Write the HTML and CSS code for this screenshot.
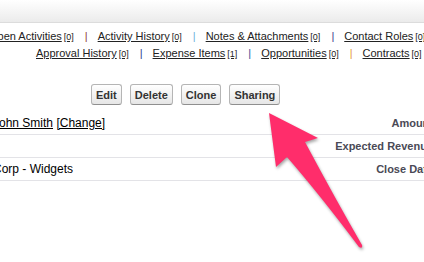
FILE: index.html
```html
<!DOCTYPE html>
<html lang="en">
<head>
	<meta charset="UTF-8">
	<title>Opportunity Detail</title>
	<link rel="stylesheet" href="styles.css">
</head>
<body>
	<div class="topbar"></div>
	<div class="linklets">
		<div class="linkrow first">
			<a href="#">Open Activities</a><span class="count">[0]</span>
			<span class="sep red">|</span>
			<a href="#">Activity History</a><span class="count">[0]</span>
			<span class="sep sky">|</span>
			<a href="#">Notes &amp; Attachments</a><span class="count">[0]</span>
			<span class="sep purple">|</span>
			<a href="#">Contact Roles</a><span class="count">[0]</span>
		</div>
		<div class="linkrow second">
			<a href="#">Approval History</a><span class="count">[0]</span>
			<span class="sep navy">|</span>
			<a href="#">Expense Items</a><span class="count">[1]</span>
			<span class="sep blue">|</span>
			<a href="#">Opportunities</a><span class="count">[0]</span>
			<span class="sep orange">|</span>
			<a href="#">Contracts</a><span class="count">[0]</span>
		</div>
	</div>
	<div class="buttons">
		<button class="btn">Edit</button>
		<button class="btn">Delete</button>
		<button class="btn">Clone</button>
		<button class="btn">Sharing</button>
	</div>
	<div class="details">
		<div class="row">
			<div class="value"><a href="#">John Smith</a> <a href="#">[Change]</a></div>
			<div class="label">Amount</div>
		</div>
		<div class="row">
			<div class="value"></div>
			<div class="label">Expected Revenue</div>
		</div>
		<div class="row">
			<div class="value">Corp - Widgets</div>
			<div class="label">Close Date</div>
		</div>
	</div>
	<svg class="arrow" width="424" height="262" viewBox="0 0 424 262">
		<path d="M269 113 L318 138 L305 142 Q336 200 362 245 Q363 249 359 247 Q320 195 287 157 L276 167 Z" fill="#ff2d6b"/>
	</svg>
</body>
</html>
```

FILE: styles.css
```css
*{
	margin: 0;
	padding: 0;
}
html,body{
	overflow: hidden;
}
body{
	width: 424px;
	height: 262px;
	background: #fff;
	font-family: "Liberation Sans", Arial, sans-serif;
	color: #000;
	position: relative;
}
.topbar{
	height: 22px;
	background: linear-gradient(#fff, #ebebeb);
	border-bottom: 1px solid #dcdcdc;
}
.linklets{
	margin-top: 5px;
	white-space: nowrap;
}
.linkrow{
	height: 17px;
	line-height: 17px;
	font-size: 11px;
	display: flex;
	align-items: baseline;
}
.linkrow.first{
	margin-left: -11px;
}
.linkrow.second{
	margin-left: 36px;
}
.linkrow a{
	color: #222;
	text-decoration: underline;
}
.count{
	font-size: 9px;
	color: #222;
	margin-left: 2px;
	text-decoration: underline;
}
.sep{
	margin: 0 10px 0 11px;
	font-size: 11px;
}
.red{ color: #8e3b3b; }
.sky{ color: #6fb0dc; }
.purple{ color: #3c3a8c; }
.navy{ color: #2b3a8e; }
.blue{ color: #2d4d99; }
.orange{ color: #e39a3c; }
.buttons{
	display: flex;
	gap: 8px;
	margin-top: 22px;
	padding-left: 91px;
}
.btn{
	height: 21px;
	padding: 0 4px;
	font-family: "Liberation Sans", Arial, sans-serif;
	font-size: 11px;
	font-weight: bold;
	color: #333;
	background: linear-gradient(#ffffff, #e6e6e6);
	border: 1px solid #b5b5b5;
	border-bottom-color: #8f8f8f;
	border-radius: 3px;
}
.details{
	margin-top: 7px;
	margin-left: -7px;
	width: 447px;
}
.row{
	display: flex;
	justify-content: space-between;
	align-items: center;
	height: 22px;
	border-bottom: 1px solid #e3e3e7;
	font-size: 12px;
}
.value a{
	color: #000;
}
.label{
	font-size: 11px;
	font-weight: bold;
	color: #4a4a56;
	padding-right: 7px;
}
.arrow{
	position: absolute;
	left: 0;
	top: 0;
	filter: drop-shadow(1px 2px 1.5px rgba(0,0,0,0.35));
}
```
